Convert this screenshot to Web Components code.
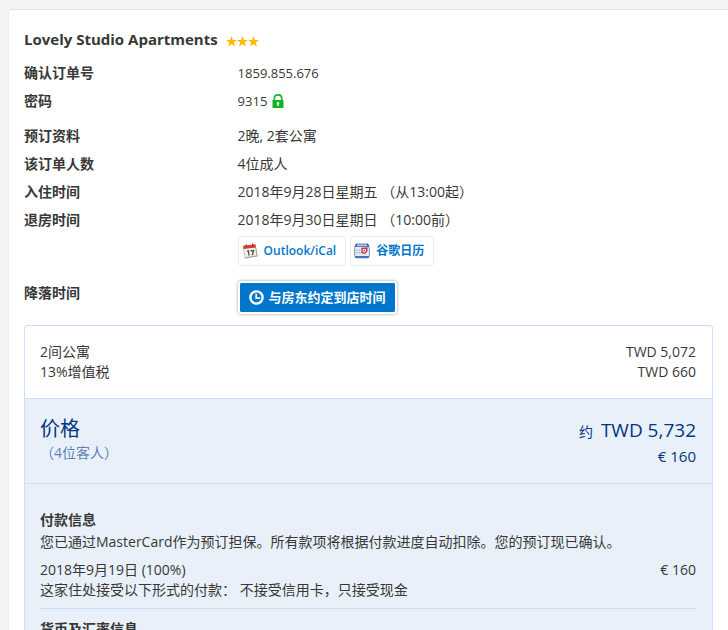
<!DOCTYPE html>
<html lang="zh-CN">
<head>
<meta charset="utf-8">
<meta name="viewport" content="width=device-width, initial-scale=1">
<title>Lovely Studio Apartments</title>
<style>
    body {
        margin: 0;
        padding: 9px 0 0 8px;
        background: #f3f3f3;
        color: #383838;
        font: 14px/20px "Open Sans", "Noto Sans CJK SC", sans-serif;
    }
</style>
</head>
<body>
<booking-card>
    <hotel-title slot="title" stars="3">Lovely Studio Apartments</hotel-title>
    <booking-row label="确认订单号"><latin-text>1859.855.676</latin-text></booking-row>
    <booking-row label="密码"><latin-text>9315</latin-text> <ui-icon name="lock"></ui-icon></booking-row>
    <booking-row label="预订资料" group>2晚, 2套公寓</booking-row>
    <booking-row label="该订单人数">4位成人</booking-row>
    <booking-row label="入住时间">2018年9月28日星期五 （从13:00起）</booking-row>
    <booking-row label="退房时间">2018年9月30日星期日 （10:00前）
        <calendar-link slot="actions" icon="outlook">Outlook/iCal</calendar-link>
        <calendar-link slot="actions" icon="google">谷歌日历</calendar-link>
    </booking-row>
    <booking-row label="降落时间" button><arrival-button>与房东约定到店时间</arrival-button></booking-row>
    <price-box slot="price">
        <price-line slot="items" amount="TWD 5,072">2间公寓</price-line>
        <price-line slot="items" amount="TWD 660">13%增值税</price-line>
        <price-total slot="total" prefix="约" amount="TWD 5,732" local="€ 160" guests="（4位客人）">价格</price-total>
        <info-block slot="info" heading="付款信息">
            <div>您已通过MasterCard作为预订担保。所有款项将根据付款进度自动扣除。您的预订现已确认。</div>
            <price-line slot="details" amount="€ 160">2018年9月19日 (100%)</price-line>
            <div slot="details">这家住处接受以下形式的付款： 不接受信用卡，只接受现金</div>
        </info-block>
        <info-block slot="info" heading="货币及汇率信息"></info-block>
    </price-box>
</booking-card>

<script>
var icons = {
    star: `<svg width="11" height="11" viewBox="0 0 11 11">
        <path fill="#feba02" d="M5.5 0l1.4 3.9H11L7.7 6.4 9 10.5 5.5 8.1 2 10.5l1.3-4.1L0 3.9h4.1z"/></svg>`,
    lock: `<svg width="12" height="14" viewBox="0 0 12 14">
        <path fill="none" stroke="#12b22a" stroke-width="1.6" d="M2.3 7V4.2C2.3 2 3.8.9 6 .9s3.7 1.1 3.7 3.3V7"/>
        <path fill="#0fb526" d="M.5 6h11v8H.5z"/>
        <path fill="#fff" d="M6 8a1.4 1.4 0 0 1 .7 2.6V12H5.3v-1.4A1.4 1.4 0 0 1 6 8z"/></svg>`,
    clock: `<svg width="15" height="15" viewBox="0 0 15 15">
        <circle cx="7.5" cy="7.5" r="6.1" fill="none" stroke="#fff" stroke-width="2.4"/>
        <path fill="none" stroke="#fff" stroke-width="1.7" d="M7.2 3.8v4.3h4"/></svg>`,
    outlook: `<svg width="16" height="16" viewBox="0 0 16 16">
        <path fill="#8a8580" d="M2.3 5.5l11.8-1.2 1.5 9-12.3 2.2z"/>
        <path fill="#f2efec" stroke="#aaa49e" stroke-width=".6" d="M1.5 5l12-1.2 1.3 8.9-11.9 2z"/>
        <path fill="#d53c36" d="M1 2.7L13.5 1.3l.5 3.3L1.5 6z"/>
        <path stroke="#7d3935" d="M4 1.2l.4 2.6M10.5.5l.4 2.6"/>
        <path fill="none" stroke="#45403d" stroke-width="1.2" d="M5 8.3l1.3-.5.7 4.7M8.5 7.9l3.1-.4-1.3 4.6"/></svg>`,
    google: `<svg width="16" height="16" viewBox="0 0 16 16">
        <path fill="#e3ebf6" stroke="#4f7fb8" stroke-width=".8" d="M2 1.2h12l1.4 4v7l-1 2.6H1.6l-1-2.6v-7z"/>
        <path fill="#2461ac" d="M2 .8h12l1.4 3H.6z"/>
        <path fill="#dfe9f6" d="M3.2 1.6h9.6l.4 1.1H2.8z"/>
        <path fill="#3f76b8" d="M.6 13h14.8l-1 2H1.6z"/>
        <path stroke="#a3b2c6" stroke-width="1.4" d="M2.4 7.4h1.3M4.8 7.4h1.3M2.4 9.6h1.3M4.8 9.6h1.3"/>
        <path fill="#fff" stroke="#d6303c" stroke-width="1.4" d="M8 5.4l5-.4-.4 3.4-2 1.8-2.6-.6z"/>
        <path stroke="#4a6ea6" stroke-width="1.1" d="M9.4 8.2l2-1.6"/></svg>`
};

// renders the html of a component into an open shadow root
function render(el, html) {
    el.attachShadow({mode: "open"}).innerHTML = html;
}

class UiIcon extends HTMLElement {
    constructor() {
        super();
        render(this, `
            <style>
                :host { display: inline-flex; flex: none; }
            </style>
            ${icons[this.getAttribute("name")]}
        `);
    }
}

// digits and latin words standing alone, a bit smaller than the chinese text
class LatinText extends HTMLElement {
    constructor() {
        super();
        render(this, `
            <style>
                :host { font-size: 13px; }
            </style>
            <slot></slot>
        `);
    }
}

class BookingCard extends HTMLElement {
    constructor() {
        super();
        render(this, `
            <style>
                :host {
                    display: block;
                    padding: 17px 15px 0;
                    background: #fff;
                    border-top: 1px solid #e0e0e0;
                    border-left: 1px solid #e6edf9;
                    border-top-left-radius: 3px;
                }
                .rows { margin: 8px 0 11px; }
            </style>
            <slot name="title"></slot>
            <div class="rows"><slot></slot></div>
            <slot name="price"></slot>
        `);
    }
}

class HotelTitle extends HTMLElement {
    constructor() {
        super();
        var stars = `<ui-icon name="star"></ui-icon>`.repeat(this.getAttribute("stars"));
        render(this, `
            <style>
                :host { display: flex; align-items: center; gap: 8px; }
                h1 { margin: 0; font-size: 15px; font-weight: 700; line-height: 24px; }
                .stars { display: flex; padding-top: 4px; }
            </style>
            <h1><slot></slot></h1>
            <span class="stars">${stars}</span>
        `);
    }
}

class BookingRow extends HTMLElement {
    constructor() {
        super();
        render(this, `
            <style>
                :host { display: grid; grid-template-columns: 31% 1fr; padding: 4px 0; }
                :host([group]) { margin-top: 7px; }
                :host([button]) { padding: 11px 0 0; }
                .label { font-weight: 700; }
                :host([button]) .label { padding-top: 2px; }
                .value { display: flex; align-items: center; gap: 5px; }
                .actions { display: flex; gap: 4px; margin-top: 6px; }
                .actions.empty { display: none; }
            </style>
            <div class="label">${this.getAttribute("label")}</div>
            <div>
                <div class="value"><slot></slot></div>
                <div class="actions"><slot name="actions"></slot></div>
            </div>
        `);
        if (!this.querySelector("[slot=actions]"))
            this.shadowRoot.querySelector(".actions").classList.add("empty");
    }
}

class CalendarLink extends HTMLElement {
    constructor() {
        super();
        render(this, `
            <style>
                :host { display: block; }
                a {
                    display: flex;
                    align-items: center;
                    gap: 6px;
                    padding: 4px 9px 4px 3px;
                    border: 1px solid #e6edfb;
                    border-radius: 3px;
                    color: #0077cc;
                    font-size: 12px;
                    font-weight: 600;
                    text-decoration: none;
                }
            </style>
            <a href="#"><ui-icon name="${this.getAttribute("icon")}"></ui-icon><slot></slot></a>
        `);
    }
}

class ArrivalButton extends HTMLElement {
    constructor() {
        super();
        render(this, `
            <style>
                :host { display: block; }
                button {
                    display: flex;
                    align-items: center;
                    gap: 5px;
                    padding: 4px 9px;
                    border: 2px solid #fff;
                    border-radius: 3px;
                    background: #0077cc;
                    background-clip: padding-box;
                    box-shadow: 0 0 3px rgba(0, 0, 0, .4);
                    color: #fff;
                    font: inherit;
                    font-size: 13px;
                    font-weight: 700;
                    line-height: 21px;
                }
            </style>
            <button type="button"><ui-icon name="clock"></ui-icon><slot></slot></button>
        `);
    }
}

class PriceBox extends HTMLElement {
    constructor() {
        super();
        render(this, `
            <style>
                :host {
                    display: block;
                    border: 1px solid #c9dffc;
                    border-radius: 3px 3px 0 0;
                }
                .items { padding: 16px 16px 16px 15px; }
                .total, .info {
                    background: #e9f0fa;
                    border-top: 1px solid #c9dffc;
                }
                .total { padding: 16px 16px 16px 15px; }
                .info { padding: 26px 16px 0 15px; }
            </style>
            <div class="items"><slot name="items"></slot></div>
            <div class="total"><slot name="total"></slot></div>
            <div class="info"><slot name="info"></slot></div>
        `);
    }
}

class PriceLine extends HTMLElement {
    constructor() {
        super();
        render(this, `
            <style>
                :host { display: flex; justify-content: space-between; }
            </style>
            <span><slot></slot></span>
            <span>${this.getAttribute("amount")}</span>
        `);
    }
}

class PriceTotal extends HTMLElement {
    constructor() {
        super();
        render(this, `
            <style>
                :host { display: flex; justify-content: space-between; color: #003580; }
                .name { font-size: 20px; line-height: 28px; }
                .guests { color: #5c7fb8; }
                .sum { text-align: right; }
                .amount { display: flex; align-items: baseline; justify-content: flex-end; gap: 8px; }
                .amount b { font-size: 19px; font-weight: 400; line-height: 30px; }
                .local { font-size: 15px; line-height: 22px; }
            </style>
            <div>
                <div class="name"><slot></slot></div>
                <div class="guests">${this.getAttribute("guests")}</div>
            </div>
            <div class="sum">
                <div class="amount"><span>${this.getAttribute("prefix")}</span><b>${this.getAttribute("amount")}</b></div>
                <div class="local">${this.getAttribute("local")}</div>
            </div>
        `);
    }
}

class InfoBlock extends HTMLElement {
    constructor() {
        super();
        render(this, `
            <style>
                :host { display: block; padding-bottom: 8px; }
                :host(:not(:first-of-type)) { padding-top: 10px; border-top: 1px solid #c9dffc; }
                h2 { margin: 0 0 2px; font-size: 14px; font-weight: 700; line-height: 20px; }
                .details { margin-top: 8px; }
            </style>
            <h2>${this.getAttribute("heading")}</h2>
            <slot></slot>
            <div class="details"><slot name="details"></slot></div>
        `);
    }
}

customElements.define("ui-icon", UiIcon);
customElements.define("latin-text", LatinText);
customElements.define("booking-card", BookingCard);
customElements.define("hotel-title", HotelTitle);
customElements.define("booking-row", BookingRow);
customElements.define("calendar-link", CalendarLink);
customElements.define("arrival-button", ArrivalButton);
customElements.define("price-box", PriceBox);
customElements.define("price-line", PriceLine);
customElements.define("price-total", PriceTotal);
customElements.define("info-block", InfoBlock);
</script>
</body>
</html>
